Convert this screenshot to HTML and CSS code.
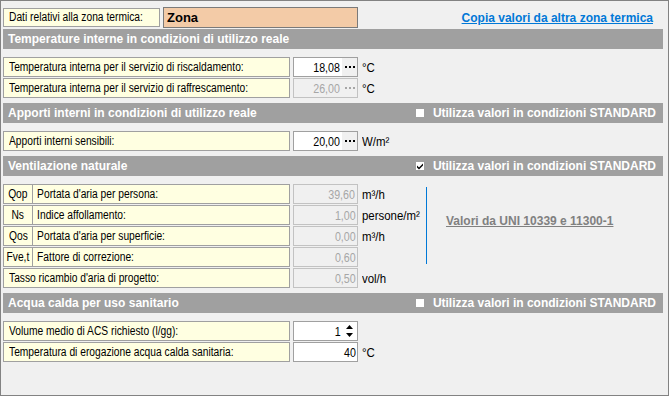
FILE: index.html
```html
<!DOCTYPE html>
<html lang="it">
<head>
    <meta charset="UTF-8">
    <title>Dati zona termica</title>
    <link rel="stylesheet" href="styles.css">
</head>
<body>

<div class="window">

    <div class="zone-row">
        <div class="label-box zone-label"><span class="t">Dati relativi alla zona termica:</span></div>
        <div class="zone-name">Zona</div>
        <a class="copy-link" href="#">Copia valori da altra zona termica</a>
    </div>

    <!-- Temperature interne -->
    <div class="section-head">
        <span>Temperature interne in condizioni di utilizzo reale</span>
    </div>
    <div class="rows">
        <div class="row">
            <div class="label-box"><span class="t">Temperatura interna per il servizio di riscaldamento:</span></div>
            <div class="field">
                <span class="value">18,08</span>
                <span class="dots"><i></i><i></i><i></i></span>
            </div>
            <span class="unit">°C</span>
        </div>
        <div class="row">
            <div class="label-box"><span class="t">Temperatura interna per il servizio di raffrescamento:</span></div>
            <div class="field disabled">
                <span class="value">26,00</span>
                <span class="dots"><i></i><i></i><i></i></span>
            </div>
            <span class="unit">°C</span>
        </div>
    </div>

    <!-- Apporti interni -->
    <div class="section-head">
        <span>Apporti interni in condizioni di utilizzo reale</span>
        <span class="std"><span class="box"></span>Utilizza valori in condizioni STANDARD</span>
    </div>
    <div class="rows">
        <div class="row">
            <div class="label-box"><span class="t">Apporti interni sensibili:</span></div>
            <div class="field">
                <span class="value">20,00</span>
                <span class="dots"><i></i><i></i><i></i></span>
            </div>
            <span class="unit">W/m²</span>
        </div>
    </div>

    <!-- Ventilazione naturale -->
    <div class="section-head">
        <span>Ventilazione naturale</span>
        <span class="std">
            <span class="box">
                <svg width="8" height="8" viewBox="0 0 8 8"><path d="M1 3.5 L3 5.5 L7 1.5 L7 3.5 L3 7.5 L1 5.5 Z" fill="#000"/></svg>
            </span>Utilizza valori in condizioni STANDARD
        </span>
    </div>
    <div class="vent">
        <div class="rows">
            <div class="row">
                <div class="label-box split"><span class="sym"><span class="t">Qop</span></span><span class="t">Portata d'aria per persona:</span></div>
                <div class="field disabled plain"><span class="value">39,60</span></div>
                <span class="unit">m³/h</span>
            </div>
            <div class="row">
                <div class="label-box split"><span class="sym"><span class="t">Ns</span></span><span class="t">Indice affollamento:</span></div>
                <div class="field disabled plain"><span class="value">1,00</span></div>
                <span class="unit">persone/m²</span>
            </div>
            <div class="row">
                <div class="label-box split"><span class="sym"><span class="t">Qos</span></span><span class="t">Portata d'aria per superficie:</span></div>
                <div class="field disabled plain"><span class="value">0,00</span></div>
                <span class="unit">m³/h</span>
            </div>
            <div class="row">
                <div class="label-box split"><span class="sym"><span class="t">Fve,t</span></span><span class="t">Fattore di correzione:</span></div>
                <div class="field disabled plain"><span class="value">0,60</span></div>
                <span class="unit"></span>
            </div>
            <div class="row">
                <div class="label-box"><span class="t">Tasso ricambio d'aria di progetto:</span></div>
                <div class="field disabled plain"><span class="value">0,50</span></div>
                <span class="unit">vol/h</span>
            </div>
        </div>
        <div class="divider"></div>
        <div class="vent-note">
            <a class="uni-link" href="#">Valori da UNI 10339 e 11300-1</a>
        </div>
    </div>

    <!-- Acqua calda sanitaria -->
    <div class="section-head">
        <span>Acqua calda per uso sanitario</span>
        <span class="std"><span class="box"></span>Utilizza valori in condizioni STANDARD</span>
    </div>
    <div class="rows">
        <div class="row">
            <div class="label-box"><span class="t">Volume medio di ACS richiesto (l/gg):</span></div>
            <div class="field">
                <span class="value">1</span>
                <span class="spin">
                    <svg width="7" height="4" viewBox="0 0 7 4"><path d="M0 4 L3.5 0 L7 4 Z" fill="#000"/></svg>
                    <svg width="7" height="4" viewBox="0 0 7 4"><path d="M0 0 L7 0 L3.5 4 Z" fill="#000"/></svg>
                </span>
            </div>
        </div>
        <div class="row">
            <div class="label-box"><span class="t">Temperatura di erogazione acqua calda sanitaria:</span></div>
            <div class="field plain"><span class="value">40</span></div>
            <span class="unit">°C</span>
        </div>
    </div>

</div>

</body>
</html>
```

FILE: styles.css
```css
body {
    margin: 0;
    font-family: "Liberation Sans", Arial, sans-serif;
    font-size: 12.5px;
    color: #000;
}

.window {
    box-sizing: border-box;
    width: 669px;
    height: 396px;
    border: 1px solid #828282;
    background-color: #f0f0f0;
    padding: 6px 5px 0 2px;
}

/* narrow text, the way the original form draws it */
.t,
.value,
.unit {
    display: inline-block;
    white-space: nowrap;
    transform: scaleX(0.82);
    transform-origin: left center;
}

/* top row */
.zone-row {
    display: flex;
    align-items: center;
    height: 20px;
    margin-bottom: 2px;
}

.label-box {
    box-sizing: border-box;
    height: 20px;
    border: 1px solid #a0a0a0;
    background-color: #ffffe1;
    padding: 0 5px;
    display: flex;
    align-items: center;
    overflow: hidden;
}

.zone-label {
    width: 157px;
    height: 19px;
}

.zone-name {
    box-sizing: border-box;
    width: 195px;
    height: 21px;
    margin-left: 3px;
    border: 1px solid #7a7a7a;
    background-color: #f3cba7;
    padding-left: 3px;
    display: flex;
    align-items: center;
    font-weight: bold;
    font-size: 13px;
}

.copy-link {
    margin-left: auto;
    margin-right: 10px;
    padding-top: 2px;
    color: #0078d7;
    font-weight: bold;
    font-size: 12px;
    text-decoration: underline;
}

/* section headers */
.section-head {
    box-sizing: border-box;
    height: 20px;
    background-color: #a0a0a0;
    color: #fff;
    font-weight: bold;
    font-size: 12px;
    display: flex;
    align-items: center;
    justify-content: space-between;
    padding: 0 7px 0 5px;
}

.std {
    display: flex;
    align-items: center;
}

.box {
    width: 8px;
    height: 8px;
    background-color: #fff;
    margin-right: 9px;
    display: flex;
}

/* rows */
.rows {
    padding: 8px 0 5px;
    display: flex;
    flex-direction: column;
    gap: 1px;
}

.row {
    display: flex;
    align-items: center;
    height: 20px;
}

.row .label-box {
    width: 287px;
}

.label-box.split {
    padding: 0;
}

.sym {
    box-sizing: border-box;
    width: 29px;
    flex: none;
    height: 100%;
    border-right: 1px solid #a0a0a0;
    display: flex;
    align-items: center;
    justify-content: center;
}

.sym .t {
    transform-origin: center;
}

.split > .t {
    padding-left: 5px;
}

.field {
    box-sizing: border-box;
    width: 65px;
    height: 20px;
    margin-left: 3px;
    border: 1px solid #a0a0a0;
    background-color: #fff;
    display: flex;
    align-items: center;
    justify-content: flex-end;
    font-size: 13px;
}

.value {
    padding-right: 2px;
    transform-origin: right center;
}

.dots {
    width: 15px;
    height: 18px;
    background-color: #f0f0f0;
    display: flex;
    align-items: center;
    justify-content: center;
    gap: 2px;
}

.dots i {
    width: 2px;
    height: 2px;
    background-color: #000;
}

.spin {
    width: 15px;
    height: 18px;
    display: flex;
    flex-direction: column;
    align-items: center;
    justify-content: center;
    gap: 4px;
}

.field.disabled {
    background-color: #f0f0f0;
    border-color: #c2c2c2;
    color: #a6a6a6;
}

.field.disabled .dots i {
    background-color: #a6a6a6;
}

.unit {
    margin-left: 4px;
    font-size: 13px;
    transform: scaleX(0.88);
}

/* ventilazione */
.vent {
    display: flex;
}

.vent .unit {
    width: 64px;
}

.divider {
    width: 1px;
    height: 77px;
    margin: 11px 0 0 0;
    background-color: #0078d7;
}

.vent-note {
    height: 77px;
    margin: 11px 0 0 19px;
    padding-bottom: 10px;
    box-sizing: border-box;
    display: flex;
    align-items: center;
}

.uni-link {
    color: #808080;
    font-weight: bold;
    font-size: 12px;
    text-decoration: underline;
}
```
